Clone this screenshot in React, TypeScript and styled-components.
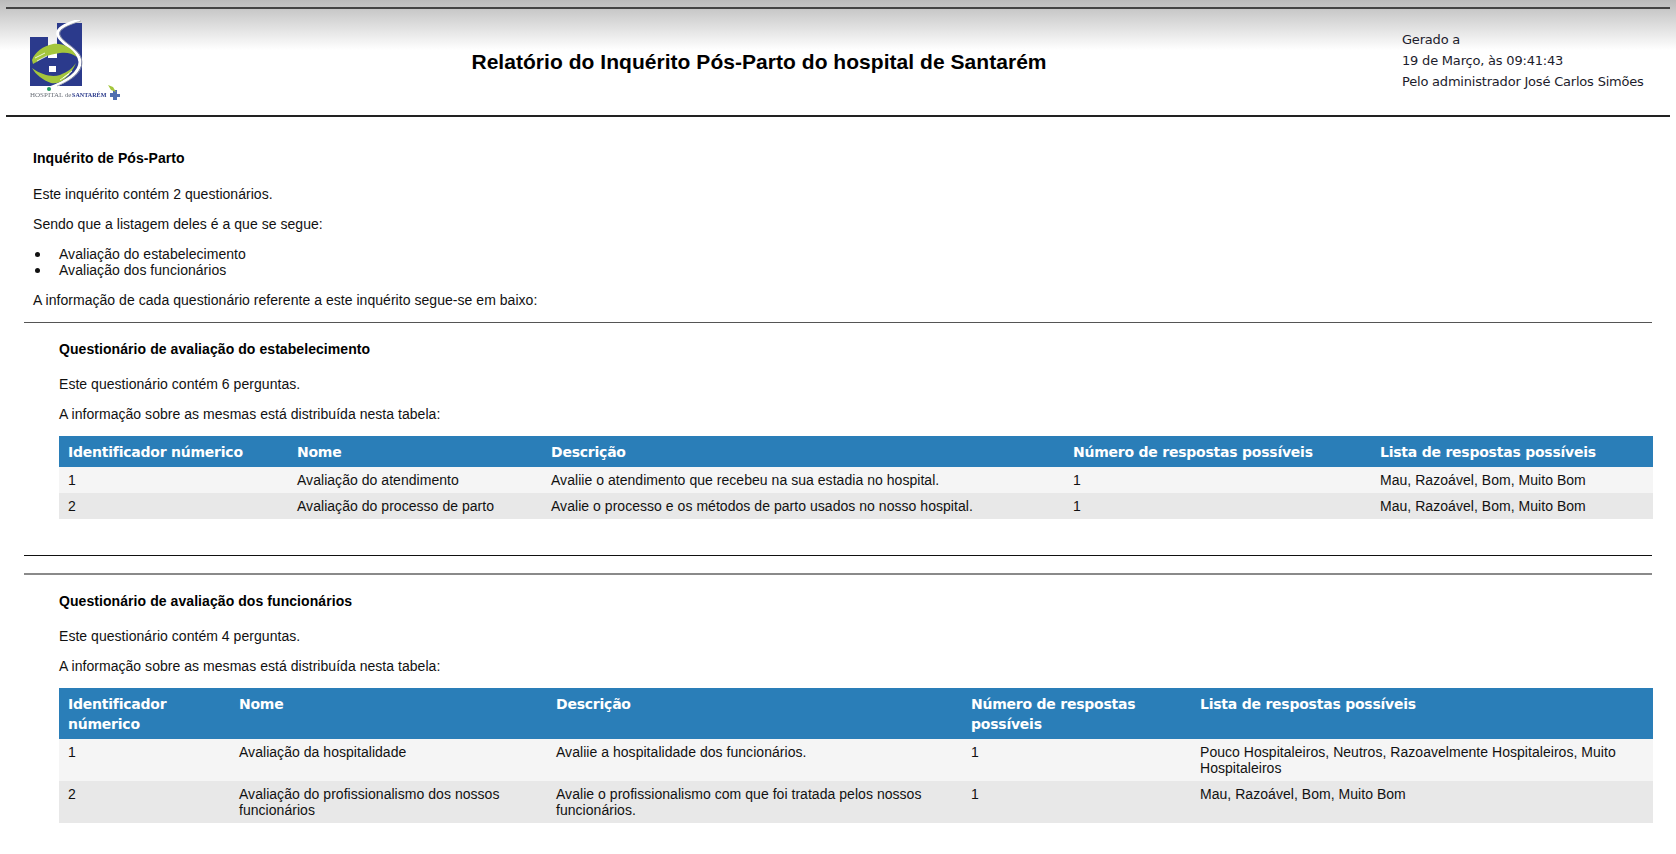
import React from "react";
import styled, { createGlobalStyle } from "styled-components";

const Global = createGlobalStyle`
  html, body { margin: 0; padding: 0; background: #fff; }
  body { font-family: "Liberation Sans", Arial, sans-serif; font-size: 14px; line-height: 16px; letter-spacing: 0.04px; color: #111; }
`;

const Page = styled.div`
  width: 1676px;
  height: 854px;
  overflow: hidden;
  background: linear-gradient(#bbb 0, #fff 50px, #fff 100%);
`;

const Report = styled.div`
  padding: 7px 6px 0 6px;
`;

const Header = styled.header`
  display: grid;
  grid-template-columns: 110px 1fr 268px;
  height: 106px;
  border-top: 2px solid #444;
  border-bottom: 2px solid #222;
`;

const LogoCell = styled.div`
  padding: 11px 0 0 23px;
`;

const LogoSvg = styled.svg`
  display: block;
  filter: blur(0.3px);
`;

const ReportTitle = styled.h1`
  margin: 0;
  padding-top: 41px;
  text-align: center;
  font-size: 21px;
  line-height: 24px;
  font-weight: bold;
  letter-spacing: 0.04px;
  color: #000;
  white-space: nowrap;
`;

const Meta = styled.div`
  padding-top: 20px;
  font-family: "DejaVu Sans", Tahoma, sans-serif;
  font-size: 13px;
  line-height: 21px;
  letter-spacing: -0.2px;
  color: #1c1c2c;
`;

const MetaLine = styled.div``;

const Main = styled.main`
  padding: 0 18px 0 18px;
`;

const Intro = styled.section`
  padding: 33px 0 0 9px;
`;

const Heading = styled.h4<{ $gap: number }>`
  margin: 0 0 ${(p) => p.$gap}px;
  font-size: 14px;
  line-height: 16px;
  font-weight: bold;
  letter-spacing: 0.07px;
  color: #000;
`;

const Para = styled.p`
  margin: 0 0 14px;
`;

const List = styled.ul`
  margin: 0 0 14px;
  padding: 0;
  list-style: none;
`;

const Item = styled.li`
  display: flex;
  &::before {
    content: "";
    flex: none;
    width: 5px;
    height: 5px;
    margin: 6px 19px 0 2px;
    border-radius: 50%;
    background: #111;
  }
`;

const Section = styled.section<{ $rule: string; $weight: number; $top: number }>`
  border-top: ${(p) => p.$weight}px solid ${(p) => p.$rule};
  padding: ${(p) => p.$top}px 0 0 35px;
`;

const SectionEnd = styled.hr`
  margin: 36px 0 17px;
  border: 0;
  border-top: 1px solid #111;
`;

const Table = styled.table`
  width: 100%;
  table-layout: fixed;
  border-collapse: collapse;
  margin-top: 14px;
`;

const Col = styled.col<{ $w: number }>`
  width: ${(p) => p.$w}px;
`;

const Head = styled.th`
  padding: 6px 9px 5px;
  background: #2a7eb8;
  color: #fff;
  text-align: left;
  vertical-align: top;
  font-family: "DejaVu Sans", Verdana, sans-serif;
  font-size: 14px;
  line-height: 20px;
  font-weight: bold;
  letter-spacing: -0.23px;
`;

const Row = styled.tr<{ $even?: boolean }>`
  background: ${(p) => (p.$even ? "#e8e8e8" : "#f5f5f5")};
`;

const Cell = styled.td`
  padding: 5px 9px;
  vertical-align: top;
`;

const Logo = () => (
  <LogoSvg width="96" height="84" viewBox="0 0 96 84">
    <rect x="1" y="17" width="18" height="49" fill="#2b3a8c" />
    <rect x="18" y="38" width="11" height="28" fill="#2b3a8c" />
    <rect x="28" y="3" width="25" height="63" fill="#2b3a8c" />
    <path d="M51 0C36 4 27 9 29 15C31 24 51 30 51 42C51 54 36 62 21 68" fill="none" stroke="#fff" strokeWidth="3" />
    <path d="M52 1C38 5 29 10 31 15C33 23 53 29 53 42C53 54 40 61 28 66" fill="none" stroke="#9ea3ad" strokeWidth="0.8" />
    <path d="M3 40C6 32 14 26 24 24C33 23 43 27 48 37C43 33 37 32 31 33C24 34 16 36 12 39C9 41 6 43 4 44Z" fill="#a4c63c" />
    <path d="M6 38L16 33M8 41L18 36" stroke="#fff" strokeWidth="0.8" />
    <path d="M3 48C7 55 14 60 22 63C31 65 41 57 47 43C43 49 38 52 31 55C24 57 14 56 3 48Z" fill="#a4c63c" />
    <path d="M34 58L43 51M31 60L40 54" stroke="#fff" strokeWidth="0.8" />
    <rect x="20" y="46" width="7" height="6" fill="#fff" />
    <circle cx="20" cy="69" r="2" fill="#1d9a5c" />
    <text x="1" y="77" fontFamily="Liberation Serif, serif" fontSize="7" letterSpacing="0" fill="#6a6f78">HOSPITAL de</text>
    <text x="43" y="77" fontFamily="Liberation Serif, serif" fontSize="6.1" fontWeight="bold" letterSpacing="0" fill="#2b3a8c">SANTARÉM</text>
    <path d="M84 70h4v4h3v3h-3v3h-4v-3h-3v-4h3z" fill="#4f6fb0" />
    <path d="M79 65l5 2l3 5l-5-2z" fill="#a4c63c" />
  </LogoSvg>
);

type Q = { id: string; nome: string; desc: string; n: string; lista: string };

const cols = ["Identificador númerico", "Nome", "Descrição", "Número de respostas possíveis", "Lista de respostas possíveis"];

const QTable = ({ widths, rows }: { widths: number[]; rows: Q[] }) => (
  <Table>
    <colgroup>
      {widths.map((w, i) => (
        <Col key={i} $w={w} />
      ))}
    </colgroup>
    <thead>
      <tr>
        {cols.map((c) => (
          <Head key={c}>{c}</Head>
        ))}
      </tr>
    </thead>
    <tbody>
      {rows.map((r, i) => (
        <Row key={r.id} $even={i % 2 === 1}>
          <Cell>{r.id}</Cell>
          <Cell>{r.nome}</Cell>
          <Cell>{r.desc}</Cell>
          <Cell>{r.n}</Cell>
          <Cell>{r.lista}</Cell>
        </Row>
      ))}
    </tbody>
  </Table>
);

const q1: Q[] = [
  { id: "1", nome: "Avaliação do atendimento", desc: "Avaliie o atendimento que recebeu na sua estadia no hospital.", n: "1", lista: "Mau, Razoável, Bom, Muito Bom" },
  { id: "2", nome: "Avaliação do processo de parto", desc: "Avalie o processo e os métodos de parto usados no nosso hospital.", n: "1", lista: "Mau, Razoável, Bom, Muito Bom" },
];

const q2: Q[] = [
  { id: "1", nome: "Avaliação da hospitalidade", desc: "Avaliie a hospitalidade dos funcionários.", n: "1", lista: "Pouco Hospitaleiros, Neutros, Razoavelmente Hospitaleiros, Muito Hospitaleiros" },
  { id: "2", nome: "Avaliação do profissionalismo dos nossos funcionários", desc: "Avalie o profissionalismo com que foi tratada pelos nossos funcionários.", n: "1", lista: "Mau, Razoável, Bom, Muito Bom" },
];

export default function App() {
  return (
    <Page>
      <Global />
      <Report>
        <Header>
          <LogoCell>
            <Logo />
          </LogoCell>
          <ReportTitle>Relatório do Inquérito Pós-Parto do hospital de Santarém</ReportTitle>
          <Meta>
            <MetaLine>Gerado a</MetaLine>
            <MetaLine>19 de Março, às 09:41:43</MetaLine>
            <MetaLine>Pelo administrador José Carlos Simões</MetaLine>
          </Meta>
        </Header>
        <Main>
          <Intro>
            <Heading $gap={20}>Inquérito de Pós-Parto</Heading>
            <Para>Este inquérito contém 2 questionários.</Para>
            <Para>Sendo que a listagem deles é a que se segue:</Para>
            <List>
              <Item>Avaliação do estabelecimento</Item>
              <Item>Avaliação dos funcionários</Item>
            </List>
            <Para>A informação de cada questionário referente a este inquérito segue-se em baixo:</Para>
          </Intro>
          <Section $rule="#555" $weight={1} $top={18}>
            <Heading $gap={19}>Questionário de avaliação do estabelecimento</Heading>
            <Para>Este questionário contém 6 perguntas.</Para>
            <Para>A informação sobre as mesmas está distribuída nesta tabela:</Para>
            <QTable widths={[229, 254, 522, 307, 282]} rows={q1} />
          </Section>
          <SectionEnd />
          <Section $rule="#8a8a8a" $weight={2} $top={18}>
            <Heading $gap={19}>Questionário de avaliação dos funcionários</Heading>
            <Para>Este questionário contém 4 perguntas.</Para>
            <Para>A informação sobre as mesmas está distribuída nesta tabela:</Para>
            <QTable widths={[171, 317, 415, 229, 462]} rows={q2} />
          </Section>
        </Main>
      </Report>
    </Page>
  );
}
